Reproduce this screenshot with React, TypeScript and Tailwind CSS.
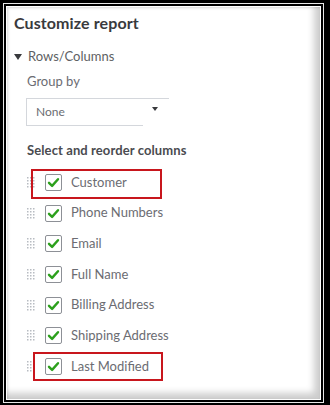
import React from 'react';

const columns = [
  'Customer',
  'Phone Numbers',
  'Email',
  'Full Name',
  'Billing Address',
  'Shipping Address',
  'Last Modified',
];

function DragHandle() {
  const dots = [];
  for (let r = 0; r < 4; r++) {
    for (let c = 0; c < 3; c++) {
      dots.push(<rect key={`${r}-${c}`} x={c * 3} y={r * 3} width="1.5" height="1.5" fill="#b8bcc2" />);
    }
  }
  return (
    <svg width="9" height="11" viewBox="0 0 9 11" className="shrink-0">
      {dots}
    </svg>
  );
}

function CheckBox() {
  return (
    <div className="w-[17px] h-[17px] border border-[#8d9096] rounded-[2px] bg-white flex items-center justify-center shrink-0">
      <svg width="13" height="13" viewBox="0 0 13 13">
        <path d="M2 6.8 L5.1 9.9 L11 3.2" fill="none" stroke="#2ca01c" strokeWidth="2.4" strokeLinecap="round" strokeLinejoin="round" />
      </svg>
    </div>
  );
}

function App() {
  return (
    <div className="w-[330px] h-[405px] bg-black pt-[3px] pl-[3px] pr-[6px] pb-[2px]" style={{ fontFamily: 'Lato, "Noto Sans", sans-serif' }}>
      <div className="w-full h-full border border-[#e8e8e8]">
        <div className="w-full h-full border-2 border-black">
          <div className="w-full h-full border border-white bg-white shadow-[inset_-6px_-6px_7px_rgba(0,0,0,0.2),inset_1px_1px_3px_rgba(0,0,0,0.15)]">
            {/* Header */}
            <div className="h-[30px] flex items-center pl-[7px] pt-[2px]">
              <span className="text-[16px] font-bold text-[#393a3d] tracking-[0.1px]">Customize report</span>
            </div>

            {/* Rows/Columns section */}
            <div className="mt-[10px] h-[20px] flex items-center pl-[7px] gap-[6px]">
              <svg width="8" height="6" viewBox="0 0 8 6">
                <path d="M0 0 L8 0 L4 6 Z" fill="#393a3d" />
              </svg>
              <span className="text-[13px] text-[#5e5f63]">Rows/Columns</span>
            </div>

            <div className="mt-[5px] h-[20px] flex items-center pl-[20px]">
              <span className="text-[13px] text-[#6b6c72]">Group by</span>
            </div>

            <div className="mt-[6px] ml-[19px] flex h-[28px]">
              <div className="w-[117px] border-l border-t border-b border-[#d4d7dc] flex items-center pl-[9px]">
                <span className="text-[12px] text-[#6b6c72]">None</span>
              </div>
              <div className="w-[26px] border-t border-[#d4d7dc] flex items-start pt-[8px] pl-[9px]">
                <svg width="6" height="4" viewBox="0 0 6 4">
                  <path d="M0 0 L6 0 L3 4 Z" fill="#393a3d" />
                </svg>
              </div>
            </div>

            <div className="mt-[15px] h-[20px] flex items-center pl-[20px]">
              <span className="text-[13px] font-bold text-[#4a4b50] tracking-[0.1px]">Select and reorder columns</span>
            </div>

            {/* Column list */}
            <div className="mt-[6px] pl-[20px] flex flex-col">
              {columns.map((name, i) => (
                <div key={name} className="relative h-[30.7px] flex items-center">
                  <DragHandle />
                  <div className="ml-[9px]">
                    <CheckBox />
                  </div>
                  <span className="ml-[9px] text-[13px] text-[#6b6c72]">{name}</span>
                  {i === 0 && (
                    <span className="absolute left-[4px] top-[2px] w-[131px] h-[30px] border-2 border-[#c8161d]" />
                  )}
                  {i === columns.length - 1 && (
                    <span className="absolute left-[6px] top-[1px] w-[130px] h-[29px] border-2 border-[#c8161d]" />
                  )}
                </div>
              ))}
            </div>
          </div>
        </div>
      </div>
    </div>
  );
}

export default App;
